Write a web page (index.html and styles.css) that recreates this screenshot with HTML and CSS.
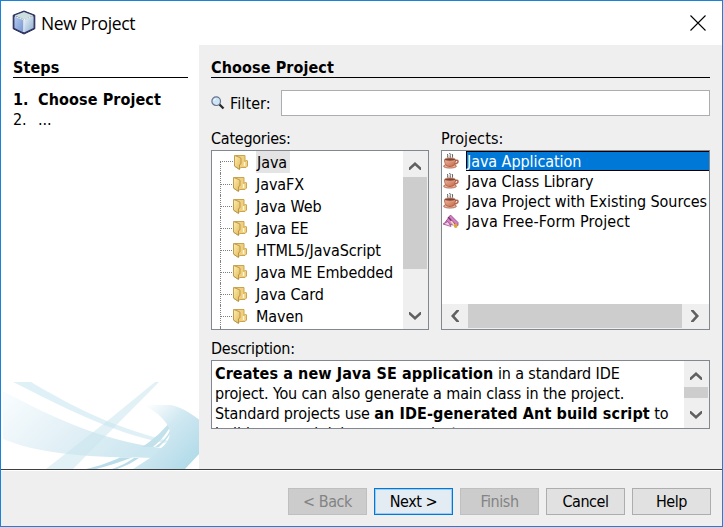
FILE: index.html
```html
<!DOCTYPE html>
<html lang="en">
<head>
<meta charset="utf-8">
<title>New Project</title>
<link rel="stylesheet" href="styles.css">
</head>
<body>
<svg class="defs" width="0" height="0">
  <defs>
    <linearGradient id="gold" x1="0" y1="0" x2="1" y2="1"><stop offset="0" stop-color="#fff0ac"/><stop offset="1" stop-color="#e0b75c"/></linearGradient>
    <linearGradient id="clay" x1="0" y1="0" x2="1" y2="1"><stop offset="0" stop-color="#f2b69b"/><stop offset="1" stop-color="#c4664a"/></linearGradient>
    <symbol id="folder" viewBox="0 0 16 16">
      <path d="M2.500 1.500H12v6l1.500-1.500 1 1v5l-1.500 1.500H8l-2 1.500-4-2.500z" fill="#f0d080" stroke="#c9a551"/>
      <path d="M1.500 1.500l5.500 2c.8.300 1 .7 1 1.300v5l-1.500 1v4.700L1.500 12z" fill="url(#gold)" stroke="#b08a3c" stroke-width=".8"/>
      <path d="M11.500 8v4" stroke="#fff6d5" stroke-width="1.400"/>
    </symbol>
    <symbol id="cup" viewBox="0 0 16 16">
      <path d="M4 1c2 1-.5 2 1.500 5M6.500 0c2 2-.5 3 1.500 6M9 1c1.500 1.500-.5 2.500 1 5" fill="none" stroke="#555" stroke-width="1"/>
      <ellipse cx="7" cy="13.200" rx="6.500" ry="1.900" fill="#e9ad92" stroke="#9c5743" stroke-width=".7"/>
      <path d="M11.500 8c4.500-2.500 5 2 0 3.200" fill="none" stroke="#b5644a" stroke-width="1.400"/>
      <path d="M1.500 6.500c0 4 1.200 7 5.500 7s5.500-3 5.500-7z" fill="url(#clay)" stroke="#9c503a" stroke-width=".7"/>
      <ellipse cx="7" cy="6.500" rx="5.500" ry="1.700" fill="#7d4535" stroke="#e8a88c" stroke-width=".8"/>
    </symbol>
    <symbol id="up" viewBox="0 0 12 8"><path d="M0 8V5.500L6 0l6 5.500V8h-1L6 3.500 1 8z" fill="#606060"/></symbol>
  </defs>
</svg>
<div class="window">
  <header class="titlebar">
    <svg class="cube" width="24" height="25" viewBox="0 0 24 25">
      <defs>
        <linearGradient id="face" x1="0" y1="0" x2="1" y2="1"><stop offset="0" stop-color="#b5ccef"/><stop offset="1" stop-color="#7494d0"/></linearGradient>
        <linearGradient id="side" x1="0" y1="0" x2="1" y2="1"><stop offset="0" stop-color="#e9f3f8"/><stop offset="1" stop-color="#8dadd2"/></linearGradient>
      </defs>
      <path d="M12 1l10.800 4.200v13.600L12 24 1.200 18.800V5.200z" fill="#2b2d5c" stroke="#2b2d5c" stroke-linejoin="round"/>
      <path d="M12 2l9.300 3.600L12 9.500 2.600 5.600z" fill="#cbe0df"/>
      <path d="M2.400 6.500l9.100 3.400v12.700l-9.100-4.500z" fill="url(#face)"/>
      <path d="M12 9.900l9.600-3.600v11.800L12 22.600z" fill="url(#side)"/>
      <path d="M11.700 22V9.800l9-3.400M11.700 9.800L3 6.500" fill="none" stroke="#eef7fb"/>
    </svg>
    <h1 class="title">New Project</h1>
    <svg class="close" width="16" height="16" viewBox="0 0 16 16"><path d="M.5.500l15 15M15.500.500l-15 15" stroke="#000" stroke-width="1.100"/></svg>
  </header>
  <div class="main">
    <aside class="steps">
      <h2 class="heading">Steps</h2>
      <ol class="step-list">
        <li class="step current"><span class="num">1.</span><span>Choose Project</span></li>
        <li class="step"><span class="num">2.</span><span>...</span></li>
      </ol>
      <svg class="swoosh" width="196" height="87" viewBox="0 0 196 87">
        <defs>
          <linearGradient id="w1" x1="0" y1="0" x2="1" y2=".4"><stop offset="0" stop-color="#fafdfe"/><stop offset=".55" stop-color="#e2f0f6"/><stop offset="1" stop-color="#cde7f0"/></linearGradient>
          <linearGradient id="w2" x1="0" y1="0" x2="1" y2="1"><stop offset=".1" stop-color="#fff"/><stop offset=".45" stop-color="#d0e8f1"/><stop offset="1" stop-color="#abd8e7"/></linearGradient>
        </defs>
        <path d="M0 9C45 33 95 58 158 66l13 .500L150 76C110 75 45 76 0 57z" fill="url(#w1)"/>
        <path d="M10 0h18C70 25 112 46 166 59l-4 2C109 51 58 24 10 0z" fill="#d9edf5" opacity=".85"/>
        <path d="M152 0h4L70 87H43L108 36z" fill="#cae5ef" opacity=".55"/>
        <path d="M139 65C154 55 160 48 166 41l1 4c-5 9-11 15-17 20zM152 65c7-5 12-10 15-16l0 3c-3 5-7 9-11 13z" fill="#c2e1eb"/>
        <path d="M83 87c14-3 24-7 34-11.500h12C117 80 106 84 93 87zM109 87c9-3 16-7 22-11h5C130 80 123 84 114 87z" fill="#badde9"/>
        <path d="M140 23.500c12-1 20-.5 28-.500 10 2 19 8 28 14.500V72l-14 15H130l17-11 11-10c8-6 11-14 7-22-5-9-14-16-25-20.500z" fill="url(#w2)"/>
      </svg>
    </aside>
    <section class="content">
      <h2 class="heading">Choose Project</h2>
      <div class="filter">
        <svg class="lens" width="15" height="15" viewBox="0 0 15 15"><path d="M8 8l4.500 4.500" stroke="#26282c" stroke-width="2.300"/><circle cx="5.200" cy="5.200" r="4.300" fill="#cee4f7" stroke="#63738b" stroke-width="1.200"/><path d="M3 5c0-1.300.8-2 2-2" stroke="#fff" fill="none"/></svg>
        <label class="filter-label" for="filter">Filter:</label>
        <input class="filter-input" id="filter" type="text">
      </div>
      <div class="lists">
        <div class="categories">
          <div class="label">Categories:</div>
          <div class="box list">
            <ul class="tree">
              <li><svg class="folder"><use href="#folder"/></svg><span class="name active">Java</span></li>
              <li><svg class="folder"><use href="#folder"/></svg><span class="name">JavaFX</span></li>
              <li><svg class="folder"><use href="#folder"/></svg><span class="name">Java Web</span></li>
              <li><svg class="folder"><use href="#folder"/></svg><span class="name">Java EE</span></li>
              <li><svg class="folder"><use href="#folder"/></svg><span class="name">HTML5/JavaScript</span></li>
              <li><svg class="folder"><use href="#folder"/></svg><span class="name">Java ME Embedded</span></li>
              <li><svg class="folder"><use href="#folder"/></svg><span class="name">Java Card</span></li>
              <li><svg class="folder"><use href="#folder"/></svg><span class="name">Maven</span></li>
              <li></li>
            </ul>
            <div class="vscroll">
              <span class="arrow"><svg width="12" height="8"><use href="#up"/></svg></span>
              <span class="thumb tree-thumb"></span>
              <span class="arrow down"><svg width="12" height="8"><use href="#up"/></svg></span>
            </div>
          </div>
        </div>
        <div class="projects">
          <div class="label">Projects:</div>
          <div class="box list column">
            <ul class="project-list">
              <li><svg class="cup"><use href="#cup"/></svg><span class="pname selected">Java Application</span></li>
              <li><svg class="cup"><use href="#cup"/></svg><span class="pname">Java Class Library</span></li>
              <li><svg class="cup"><use href="#cup"/></svg><span class="pname">Java Project with Existing Sources</span></li>
              <li><svg class="cup" viewBox="0 0 16 16"><path d="M7.500 2L15 9.500v3L1 11z" fill="#d77fc4" stroke="#8f3d82" stroke-width=".8"/><path d="M0 11l5-2.500 3 5z" fill="#f1cde9" stroke="#8f3d82" stroke-width=".7"/><path d="M5 4l7.500 8" stroke="#71336b" stroke-width="1.200"/><path d="M8 8l4 5" stroke="#f1d5ad" stroke-width="2"/><ellipse cx="12.700" cy="12.800" rx="1.800" ry="2.200" fill="#dda33b"/></svg><span class="pname free">Java Free-Form Project</span></li>
            </ul>
            <div class="hscroll">
              <span class="arrow left"><svg width="12" height="8"><use href="#up"/></svg></span>
              <span class="hthumb"></span>
              <span class="arrow right"><svg width="12" height="8"><use href="#up"/></svg></span>
            </div>
          </div>
        </div>
      </div>
      <div class="label desc-label">Description:</div>
      <div class="box description">
        <p class="desc-text"><b>Creates a new Java SE application</b> in a standard IDE<br>project. You can also generate a main class in the project.<br>Standard projects use <b>an IDE-generated Ant build script</b> to<br>build, run, and debug your project.</p>
        <div class="vscroll">
          <span class="arrow"><svg width="12" height="8"><use href="#up"/></svg></span>
          <span class="thumb desc-thumb"></span>
          <span class="arrow down"><svg width="12" height="8"><use href="#up"/></svg></span>
        </div>
      </div>
    </section>
  </div>
  <footer class="footer">
    <button class="btn" disabled>&lt; Back</button>
    <button class="btn default">Next &gt;</button>
    <button class="btn" disabled>Finish</button>
    <button class="btn">Cancel</button>
    <button class="btn">Help</button>
  </footer>
</div>
</body>
</html>
```
FILE: styles.css
```css
* { box-sizing: border-box; margin: 0; padding: 0; }
body {
  font: 16px/20px "DejaVu Sans Condensed", "DejaVu Sans", sans-serif;
  letter-spacing: -0.08px;
  color: #000;
  overflow: hidden;
}
ul, ol { list-style: none; }
svg { display: block; flex: none; }
.defs { position: absolute; }
b, .heading, .current { font-weight: bold; letter-spacing: 0.1px; }

.window {
  width: 723px;
  height: 527px;
  display: flex;
  flex-direction: column;
  border: 1px solid #1883d7;
  background: #fff;
}
.titlebar {
  height: 44px;
  flex: none;
  display: flex;
  align-items: center;
  padding: 0 16px 2px 11px;
}
.title {
  flex: 1;
  margin-left: 5px;
  padding-top: 2px;
  font: 17.5px/24px "Open Sans", sans-serif;
  letter-spacing: -0.38px;
}
.close { margin-top: 1px; }

.main {
  height: 424px;
  flex: none;
  display: flex;
}
.steps {
  width: 198px;
  padding: 12px 0 0 12px;
  display: flex;
  flex-direction: column;
}
.heading {
  height: 21px;
  border-bottom: 1px solid #000;
  font-size: 16px;
  line-height: 22px;
}
.steps .heading { width: 175px; }
.step-list { margin-top: 12px; }
.step { display: flex; }
.num { width: 25px; }
.swoosh { margin: auto 0 0 -10px; }

.content {
  flex: 1;
  padding: 12px 12px 0 12px;
  background: #efefef;
}
.filter {
  height: 27px;
  margin-top: 12px;
  display: flex;
  align-items: flex-start;
}
.lens { margin-top: 6px; }
.filter-label { width: 51px; margin-left: 4px; line-height: 27px; letter-spacing: 0.1px; }
.filter-input {
  width: 429px;
  height: 26px;
  border: 1px solid #abadb3;
  background: #fff;
}
.lists { display: flex; gap: 12px; margin-top: 11px; }
.label { height: 22px; line-height: 21px; letter-spacing: -0.25px; }
.projects .label { letter-spacing: 0.1px; }
.categories { width: 218px; }
.projects { width: 269px; }
.box { border: 1px solid #828790; background: #fff; }
.list { height: 180px; display: flex; overflow: hidden; }
.column { flex-direction: column; }

.tree { flex: 1; height: 178px; overflow: hidden; padding-left: 8px; }
.tree li {
  height: 22px;
  display: flex;
  align-items: center;
  border-left: 1px dotted #808080;
}
.tree li:first-child { border-left: 0; padding-left: 1px; }
.tree li::before { content: ""; width: 11px; border-top: 1px dotted #808080; }
.tree li:last-child::before { display: none; }
.tree li:first-child::before {
  height: 11px;
  align-self: flex-end;
  margin-left: -1px;
  width: 12px;
  border-left: 1px dotted #808080;
}
.folder { width: 16px; height: 16px; }
.name { height: 22px; margin-left: 7px; padding: 0 1px; line-height: 24px; white-space: nowrap; }
.active { background: #e4e4e4; padding-right: 3px; }

.vscroll { width: 25px; flex: none; background: #efefef; display: flex; flex-direction: column; }
.arrow { width: 24px; height: 26px; flex: none; display: flex; align-items: center; justify-content: center; padding-top: 3px; }
.down { margin-top: auto; transform: rotate(180deg); padding-top: 0; }
.left svg { transform: rotate(-90deg); }
.right svg { transform: rotate(90deg); }
.thumb { width: 24px; background: #cdcdcd; }
.tree-thumb { height: 92px; }
.desc-thumb { height: 11px; }

.project-list { flex: 1; }
.project-list li { height: 20px; display: flex; align-items: center; }
.cup { width: 16px; height: 16px; margin-left: 1px; }
.pname { flex: 1; height: 20px; margin-left: 7px; padding-left: 1px; line-height: 22px; white-space: nowrap; letter-spacing: -0.07px; }
.selected { border: 1px solid #000; border-right: 0; padding-left: 0; line-height: 20px; background: #0078d7; color: #fff; }
.free { letter-spacing: 0.12px; }
.hscroll { height: 25px; display: flex; background: #efefef; }
.hscroll .arrow { width: 26px; height: 24px; padding: 0; }
.hthumb { width: 214px; height: 24px; background: #cdcdcd; }

.desc-label { margin-top: 8px; }
.description { height: 69px; display: flex; overflow: hidden; }
.desc-text { flex: 1; padding: 3px 0 0 3px; white-space: nowrap; letter-spacing: -0.13px; }

.footer {
  flex: 1;
  display: flex;
  justify-content: flex-end;
  gap: 7px;
  padding: 18px 11px 0 0;
  border-top: 1px solid #404040;
  box-shadow: inset 0 1px #fff;
  background: #efefef;
}
.btn {
  width: 79px;
  height: 27px;
  border: 1px solid #adadad;
  background: #e1e1e1;
  color: #000;
  font: inherit;
  letter-spacing: -0.45px;
}
.btn:disabled { border-color: #bfbfbf; background: #ccc; color: #838383; }
.default { border-color: #0078d7; background: #e3ebf3; box-shadow: inset 0 0 0 1px #9accf5; }
```
